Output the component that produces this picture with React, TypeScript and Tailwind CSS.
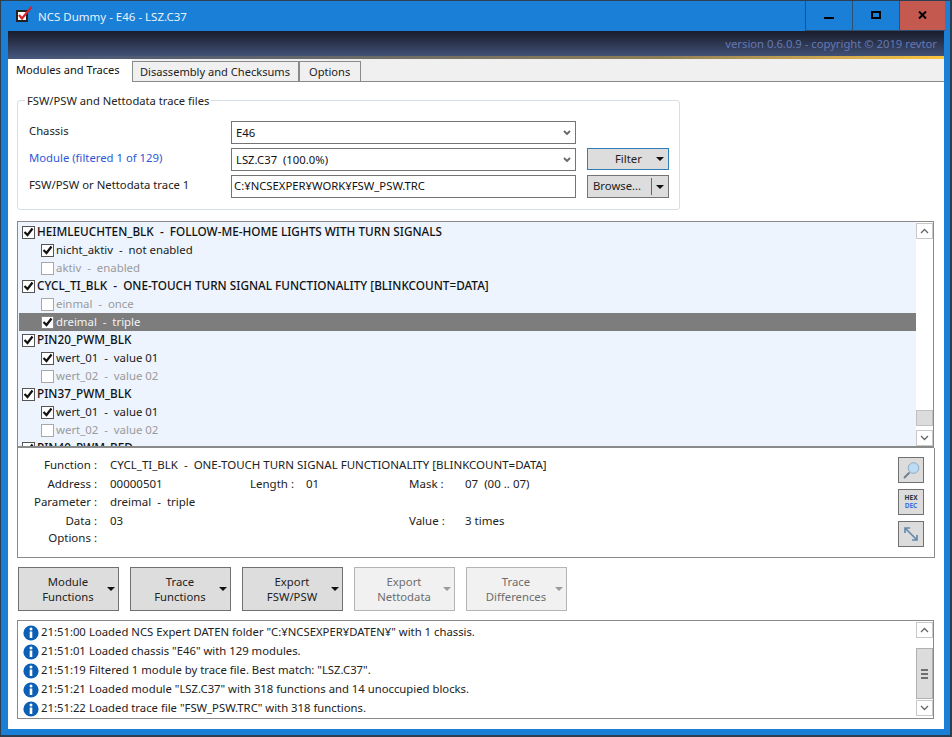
import { ReactNode } from 'react';

const rows = [
  { name: 'HEIMLEUCHTEN_BLK  -  FOLLOW-ME-HOME LIGHTS WITH TURN SIGNALS', parent: true, checked: true },
  { name: 'nicht_aktiv  -  not enabled', checked: true },
  { name: 'aktiv  -  enabled', checked: false },
  { name: 'CYCL_TI_BLK  -  ONE-TOUCH TURN SIGNAL FUNCTIONALITY [BLINKCOUNT=DATA]', parent: true, checked: true },
  { name: 'einmal  -  once', checked: false },
  { name: 'dreimal  -  triple', checked: true, selected: true },
  { name: 'PIN20_PWM_BLK', parent: true, checked: true },
  { name: 'wert_01  -  value 01', checked: true },
  { name: 'wert_02  -  value 02', checked: false },
  { name: 'PIN37_PWM_BLK', parent: true, checked: true },
  { name: 'wert_01  -  value 01', checked: true },
  { name: 'wert_02  -  value 02', checked: false },
  { name: 'PIN40_PWM_BED', parent: true, checked: true },
];

const logLines = [
  ['21:51:00', 'Loaded NCS Expert DATEN folder "C:¥NCSEXPER¥DATEN¥" with 1 chassis.'],
  ['21:51:01', 'Loaded chassis "E46" with 129 modules.'],
  ['21:51:19', 'Filtered 1 module by trace file. Best match: "LSZ.C37".'],
  ['21:51:21', 'Loaded module "LSZ.C37" with 318 functions and 14 unoccupied blocks.'],
  ['21:51:22', 'Loaded trace file "FSW_PSW.TRC" with 318 functions.'],
];

const Caret = ({ light }: { light?: boolean }) => (
  <svg width="8" height="4" viewBox="0 0 8 4" className="shrink-0">
    <path d="M0 0h8L4 4z" fill={light ? '#9a9a9a' : '#111'} />
  </svg>
);

const Chevron = ({ up }: { up?: boolean }) => (
  <svg width="9" height="6" viewBox="0 0 9 6" className="shrink-0">
    <path d={up ? 'M1 5l3.5-3.5L8 5' : 'M1 1l3.5 3.5L8 1'} fill="none" stroke="#666" strokeWidth="1.3" />
  </svg>
);

const Combo = ({ value }: { value: string }) => (
  <div className="w-[345px] h-[23px] border border-[#747474] bg-white flex items-center justify-between pl-[4px] pr-[3px] pt-[1px] text-[#111]">
    <span className="whitespace-pre">{value}</span>
    <svg width="8" height="6" viewBox="0 0 8 6" className="mr-[1px]">
      <path d="M1 1l3 3 3-3" fill="none" stroke="#666" strokeWidth="1.8" />
    </svg>
  </div>
);

const CheckBox = ({ checked, selected }: { checked: boolean; selected?: boolean }) => (
  <div className={`w-[13px] h-[13px] shrink-0 border flex items-center justify-center ${selected ? 'border-[#8a8a8a] bg-white' : checked ? 'border-[#555] bg-white' : 'border-[#a8a8a8] bg-white'}`}>
    {checked && (
      <svg width="11" height="10" viewBox="0 0 11 10">
        <path d="M1.5 5l3 3L9.5 1.5" fill="none" stroke="#111" strokeWidth="2.2" />
      </svg>
    )}
  </div>
);

const ScrollBar = ({ children }: { children: ReactNode }) => (
  <div className="w-[17px] shrink-0 bg-white flex flex-col">{children}</div>
);

const ScrollBtn = ({ up }: { up?: boolean }) => (
  <div className="h-[16px] border border-[#c8c8c8] bg-white flex items-center justify-center">
    <Chevron up={up} />
  </div>
);

const MenuButton = ({ top, bottom, disabled }: { top: string; bottom: string; disabled?: boolean }) => (
  <div className={`w-[101px] h-[44px] border flex items-center pl-[10px] pr-[3px] leading-[15px] ${disabled ? 'border-[#b4b4b4] bg-[#f1f1f1] text-[#6d6d6d]' : 'border-[#707070] bg-[#dddddd] text-[#222]'}`}>
    <div className="flex-1 text-center">
      <div>{top}</div>
      <div>{bottom}</div>
    </div>
    <Caret light={disabled} />
  </div>
);

const Label = ({ children }: { children: ReactNode }) => (
  <div className="w-[79px] text-right text-[#222] shrink-0">{children}</div>
);

const InfoIcon = () => (
  <svg width="16" height="16" viewBox="0 0 16 16" className="shrink-0">
    <circle cx="8" cy="8" r="7.6" fill="#0b5fb4" />
    <circle cx="8" cy="4" r="1.5" fill="#fff" />
    <rect x="6.7" y="6.5" width="2.6" height="6.5" fill="#fff" />
  </svg>
);

const SideBtn = ({ children }: { children: ReactNode }) => (
  <div className="w-[26px] h-[26px] border border-[#707070] bg-[#dcdcdc] flex flex-col items-center justify-center">
    {children}
  </div>
);

export default function App() {
  return (
    <div
      className="w-[952px] h-[737px] overflow-hidden bg-[#1a7fd6] border-t border-l border-r-2 border-b-2 border-t-[#2c3e50] border-l-[#2c3e50] border-r-[#2c3e50] border-b-[#2c3e50] flex flex-col text-[11.3px] font-['Noto_Sans','Open_Sans',sans-serif] text-[#111]"
    >
      {/* title bar */}
      <div className="h-[30px] flex items-start shrink-0">
        <svg width="17" height="17" viewBox="0 0 17 17" className="ml-[15px] mt-[5px] shrink-0">
          <rect x="0" y="4" width="12" height="12" fill="#222" />
          <rect x="2" y="6" width="8" height="8" fill="#fff" />
          <path d="M3 9l3 3.5L15.5 1" fill="none" stroke="#d8202a" strokeWidth="2.2" />
        </svg>
        <div className="ml-[5px] mt-[7px] text-[#e8f2fb] text-[11.5px] leading-[17px] whitespace-nowrap">NCS Dummy - E46 - LSZ.C37</div>
        <div className="ml-auto mr-[5px] flex h-[30px]">
          <div className="w-[47px] border-l border-b border-[#2d4f70] flex items-center justify-center">
            <div className="w-[10px] h-[2.5px] mt-[5px] bg-black" />
          </div>
          <div className="w-[47px] border-l border-b border-[#2d4f70] flex items-center justify-center">
            <div className="w-[10px] h-[8px] mb-[2px] border-2 border-black" />
          </div>
          <div className="w-[46px] bg-[#c45a4f] border-l border-b border-[#2d4f70] flex items-center justify-center">
            <svg width="9" height="8" viewBox="0 0 9 8" className="mb-[2px]">
              <path d="M1 0.5l7 7M8 0.5l-7 7" stroke="#000" strokeWidth="2" />
            </svg>
          </div>
        </div>
      </div>

      {/* client area */}
      <div className="flex-1 ml-[7px] mb-[6px] bg-white flex flex-col min-h-0 w-[936px]">
        {/* banner */}
        <div className="h-[28px] shrink-0 flex flex-col bg-gradient-to-b from-[#191d2c] to-[#465880]">
          <div className="flex-1 text-right pr-[7px] text-[#6478b2] text-[11.25px] leading-[25px]">version 0.6.0.9 - copyright © 2019 revtor</div>
          <div className="h-[5px] bg-gradient-to-r from-transparent via-[#8f7f58] via-70% to-[#fbc53d]" />
        </div>

        {/* tabs */}
        <div className="h-[23px] shrink-0 bg-[#f0f0f0] border-b border-[#8a8a8a] flex items-start whitespace-nowrap text-[11.1px]">
          <div className="w-[124px] h-[23px] bg-white pl-[8px] leading-[22px]">Modules and Traces</div>
          <div className="w-[167px] h-[21px] mt-[2px] border border-[#8a8a8a] pl-[7px] leading-[20px] text-[#222]">Disassembly and Checksums</div>
          <div className="w-[62px] h-[21px] mt-[2px] border border-[#8a8a8a] pl-[9px] leading-[20px] text-[#222]">Options</div>
        </div>

        {/* trace file group */}
        <div className="relative ml-[9px] mt-[18px] w-[663px] h-[110px] shrink-0 border border-[#d7dfe5] rounded-[3px] pt-[20px] pl-[11px] flex flex-col gap-[4px]">
          <div className="absolute left-[7px] top-[-9px] bg-white px-[2px] leading-[17px] text-[#222] text-[11.2px]">FSW/PSW and Nettodata trace files</div>
          <div className="flex items-start">
            <div className="w-[202px] leading-[19px] text-[#222]">Chassis</div>
            <Combo value="E46" />
          </div>
          <div className="flex items-start">
            <div className="w-[202px] leading-[19px] text-[#2c58d8]">Module (filtered 1 of 129)</div>
            <Combo value="LSZ.C37  (100.0%)" />
            <div className="ml-[11px] w-[82px] h-[22px] border border-[#2f7fbd] bg-[#dddddd] flex items-center pl-[27px]">
              <span className="text-[#222]">Filter</span>
              <span className="ml-auto mr-[4px] flex"><Caret /></span>
            </div>
          </div>
          <div className="flex items-start">
            <div className="w-[202px] leading-[19px] text-[#222]">FSW/PSW or Nettodata trace 1</div>
            <div className="w-[345px] h-[23px] border border-[#747474] bg-white flex items-center pl-[2px] text-[#111]">C:¥NCSEXPER¥WORK¥FSW_PSW.TRC</div>
            <div className="ml-[11px] w-[82px] h-[23px] border border-[#747474] bg-[#dddddd] flex items-center pl-[5px]">
              <span className="text-[#222]">Browse...</span>
              <div className="ml-auto h-[17px] w-[1px] bg-[#666]" />
              <span className="mx-[4px] flex"><Caret /></span>
            </div>
          </div>
        </div>

        {/* function tree */}
        <div className="ml-[9px] mt-[11px] w-[917px] h-[227px] shrink-0 border border-[#8a8a8a] border-b-2 flex bg-[#edf4fe] overflow-hidden pl-[1px]">
          <div className="flex-1 pt-[1px] overflow-hidden">
            {rows.map((r, i) => (
              <div
                key={i}
                className={`h-[18px] flex items-center gap-[2px] whitespace-pre ${r.parent ? 'pl-[3px] font-medium text-[11.75px] text-[#111]' : 'pl-[22px] text-[11.4px]'} ${r.selected ? 'bg-[#7d7d7d] text-[#f2f2f2]' : ''} ${!r.parent && !r.selected ? (r.checked ? 'text-[#1a1a1a]' : 'text-[#9a9a9a]') : ''}`}
              >
                <CheckBox checked={r.checked} selected={r.selected} />
                <span>{r.name}</span>
              </div>
            ))}
          </div>
          <ScrollBar>
            <div className="h-[1px]" />
            <ScrollBtn up />
            <div className="flex-1" />
            <div className="h-[16px] bg-[#dcdcdc] border border-[#c0c0c0]" />
            <div className="h-[4px]" />
            <ScrollBtn />
          </ScrollBar>
        </div>

        {/* details */}
        <div className="ml-[9px] w-[918px] h-[110px] shrink-0 border border-t-0 border-[#8a8a8a] flex text-[11.5px]">
          <div className="flex-1 pt-[8px] flex flex-col leading-[18px] text-[#222] whitespace-pre">
            <div className="flex h-[19px]">
              <Label>Function :</Label>
              <span className="ml-[13px]">CYCL_TI_BLK  -  ONE-TOUCH TURN SIGNAL FUNCTIONALITY [BLINKCOUNT=DATA]</span>
            </div>
            <div className="flex h-[18px]">
              <Label>Address :</Label>
              <span className="ml-[13px] w-[140px]">00000501</span>
              <span className="w-[56px]">Length :</span>
              <span className="w-[103px]">01</span>
              <span className="w-[56px]">Mask :</span>
              <span>07  (00 .. 07)</span>
            </div>
            <div className="flex h-[19px]">
              <Label>Parameter :</Label>
              <span className="ml-[13px]">dreimal  -  triple</span>
            </div>
            <div className="flex h-[17px]">
              <Label>Data :</Label>
              <span className="ml-[13px] w-[299px]">03</span>
              <span className="w-[56px]">Value :</span>
              <span>3 times</span>
            </div>
            <div className="flex h-[18px]">
              <Label>Options :</Label>
            </div>
          </div>
          <div className="w-[26px] mr-[10px] mt-[9px] flex flex-col gap-[6px]">
            <SideBtn>
              <svg width="20" height="20" viewBox="0 0 20 20">
                <path d="M3 18l5.5-5.5" stroke="#6f7f8f" strokeWidth="2" />
                <circle cx="12.5" cy="8" r="5.3" fill="#bcdcf4" stroke="#93abbf" />
              </svg>
            </SideBtn>
            <SideBtn>
              <div className="text-[6.5px] leading-[8px] font-bold text-[#333]">HEX</div>
              <div className="text-[6.5px] leading-[8px] font-bold text-[#3d6fe0]">DEC</div>
            </SideBtn>
            <SideBtn>
              <svg width="18" height="18" viewBox="0 0 18 18">
                <path d="M3 3l12 12M3 8V3h5M15 10v5h-5" fill="none" stroke="#6388ac" strokeWidth="1.6" />
              </svg>
            </SideBtn>
          </div>
        </div>

        {/* action buttons */}
        <div className="ml-[10px] mt-[9px] flex gap-[11px] shrink-0">
          <MenuButton top="Module" bottom="Functions" />
          <MenuButton top="Trace" bottom="Functions" />
          <MenuButton top="Export" bottom="FSW/PSW" />
          <MenuButton top="Export" bottom="Nettodata" disabled />
          <MenuButton top="Trace" bottom="Differences" disabled />
        </div>

        {/* log */}
        <div className="ml-[9px] mt-[9px] w-[917px] h-[99px] shrink-0 border border-[#8a8a8a] flex">
          <div className="flex-1 pt-[2px] pl-[5px] text-[#222]">
            {logLines.map(([time, msg]) => (
              <div key={time} className="h-[19px] flex items-center whitespace-pre">
                <InfoIcon />
                <span className="ml-[2px] w-[48px]">{time}</span>
                <span>{msg}</span>
              </div>
            ))}
          </div>
          <ScrollBar>
            <div className="h-[1px]" />
            <ScrollBtn up />
            <div className="h-[10px]" />
            <div className="h-[51px] bg-[#dcdcdc] border border-[#b0b0b0] flex flex-col items-center justify-center gap-[2px]">
              <div className="w-[7px] h-[2px] bg-[#707070]" />
              <div className="w-[7px] h-[2px] bg-[#707070]" />
              <div className="w-[7px] h-[2px] bg-[#707070]" />
            </div>
            <div className="h-[1px]" />
            <ScrollBtn />
          </ScrollBar>
        </div>
      </div>
    </div>
  );
}
